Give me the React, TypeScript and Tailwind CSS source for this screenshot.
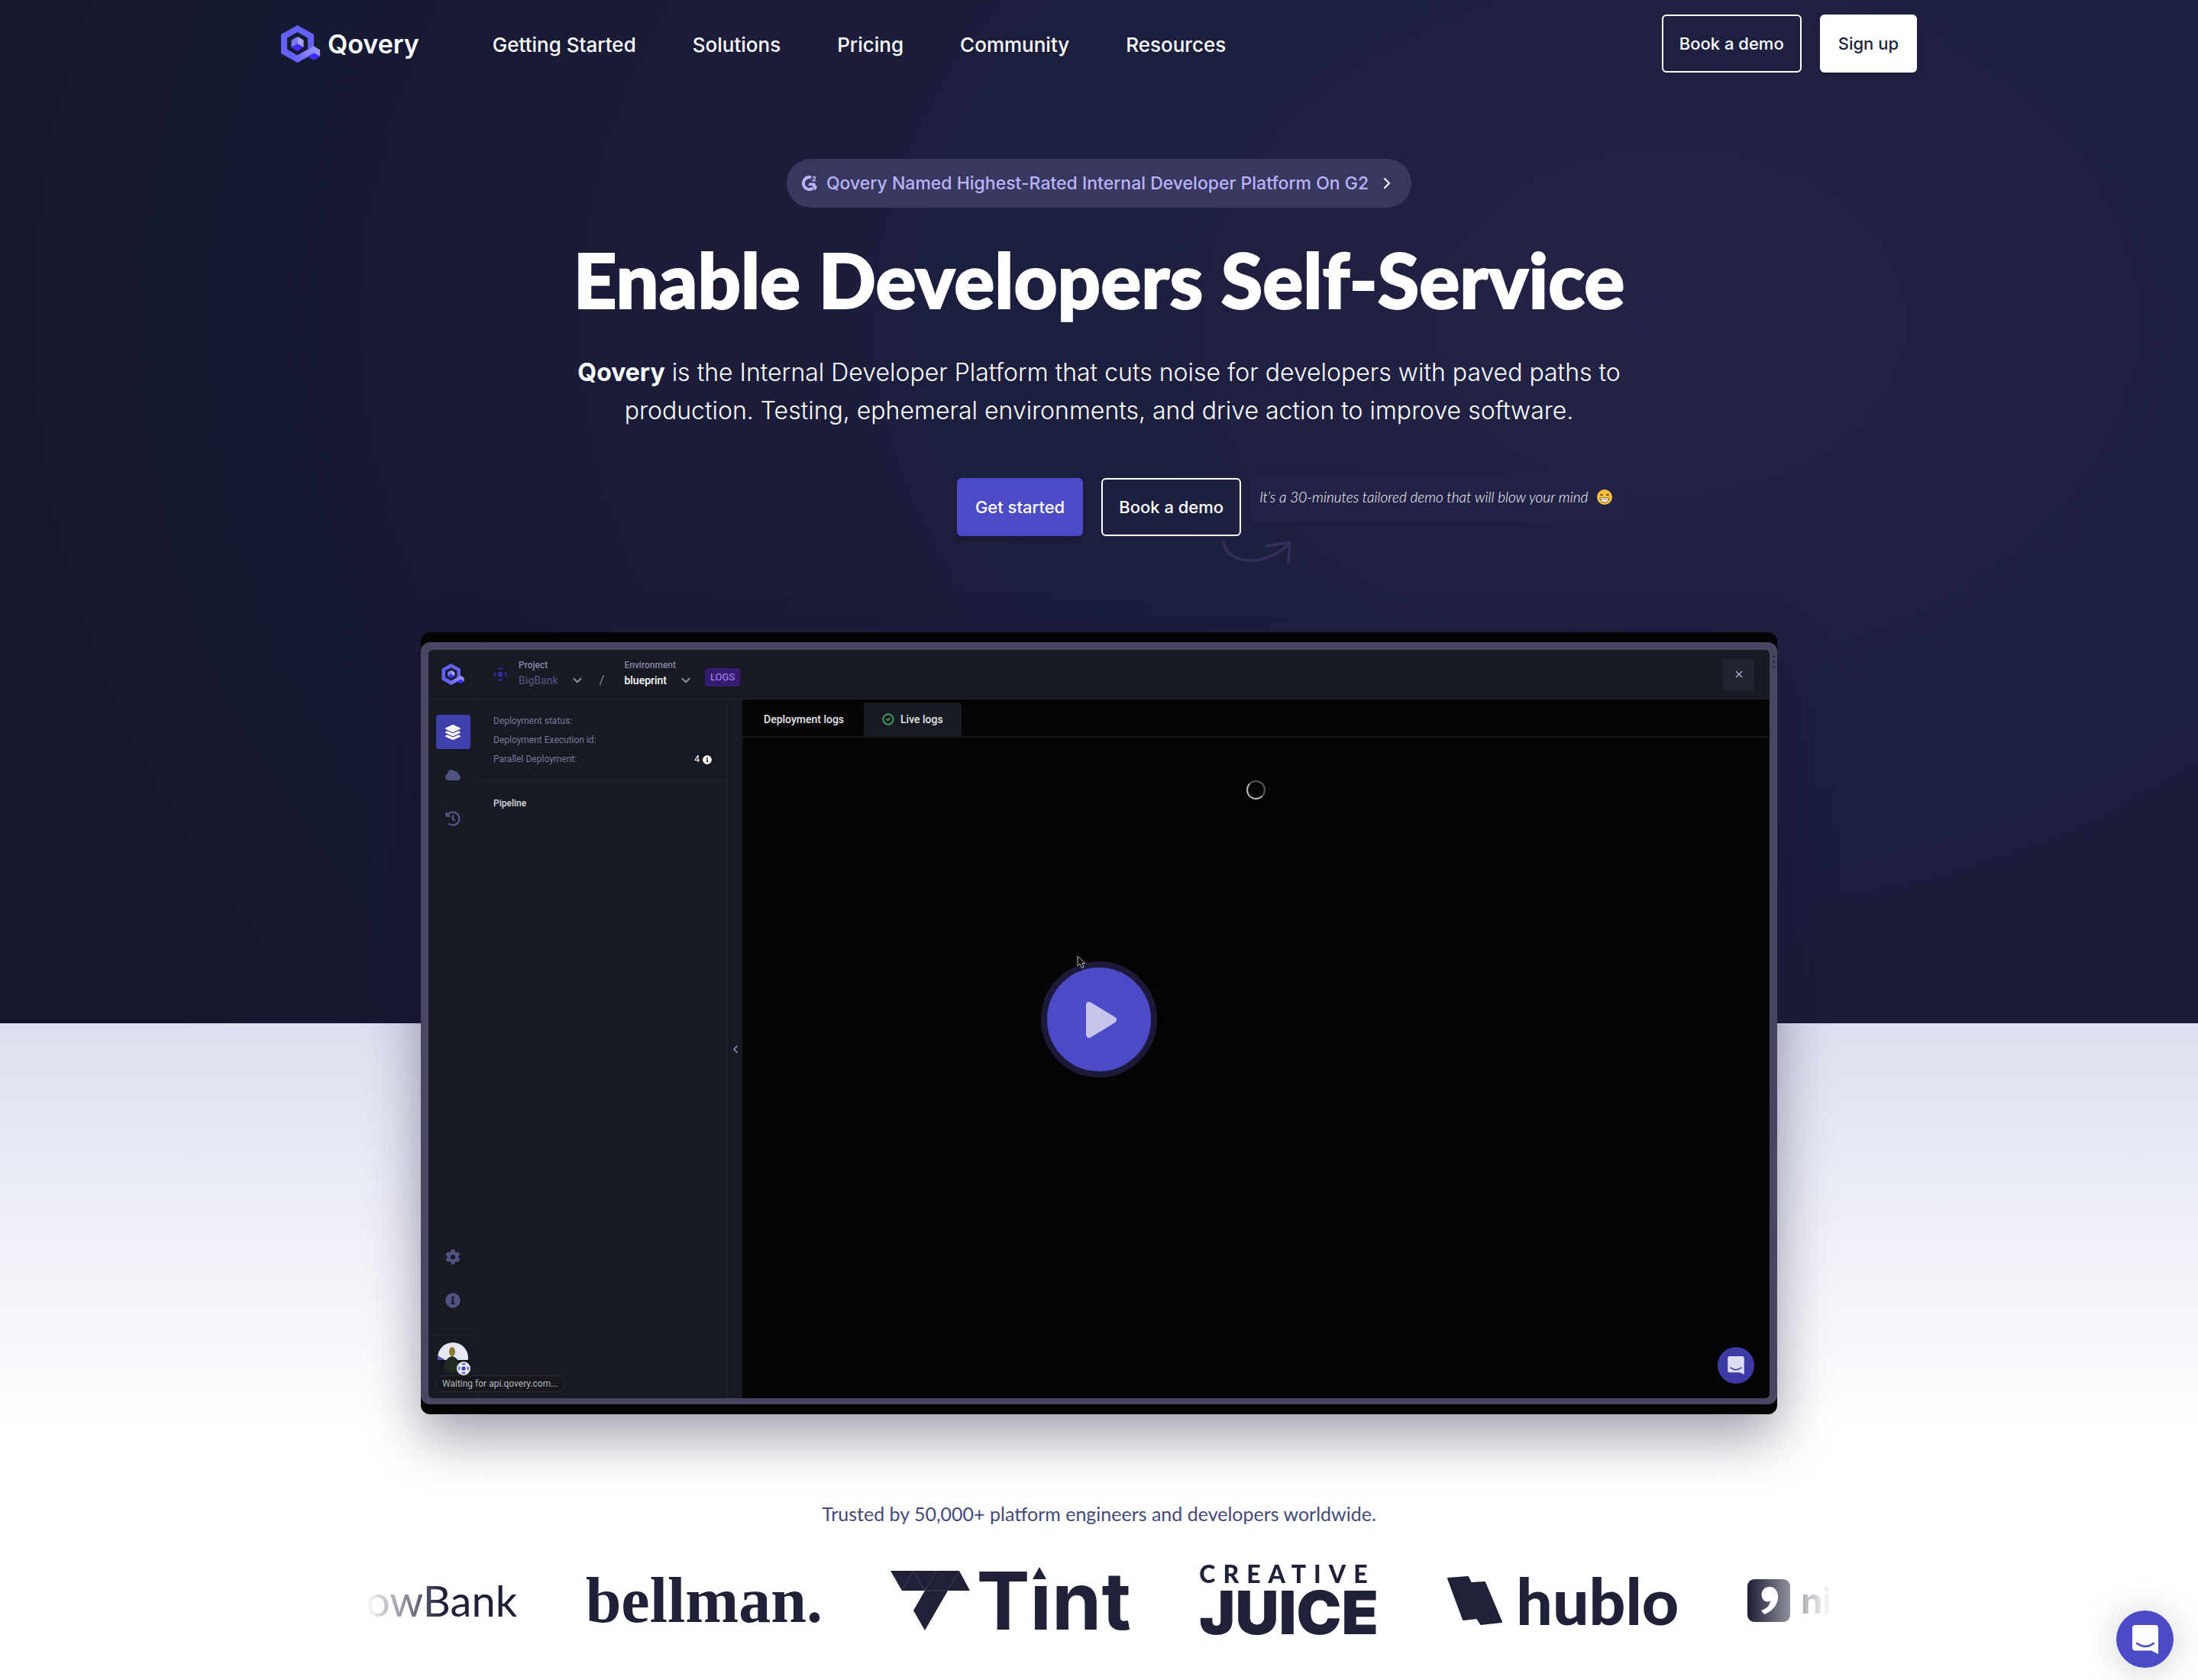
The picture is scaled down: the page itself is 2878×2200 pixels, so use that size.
import React from "react";
import { ChevronRight, ChevronDown, ChevronLeft, X, CircleCheck } from "lucide-react";
import { FaCog, FaInfoCircle, FaHistory, FaCloud, FaLayerGroup } from "react-icons/fa";

function Mark({ className }: { className?: string }) {
  return (
    <svg viewBox="0 0 51 49" className={className} aria-hidden="true">
      <defs>
        <linearGradient id="tail" x1="0" y1="0.8" x2="1" y2="0.2">
          <stop offset="0" stopColor="#6360f4" />
          <stop offset="1" stopColor="#9d98fb" />
        </linearGradient>
      </defs>
      <path fillRule="evenodd" fill="#6360f4" d="M21.500 0 43 12V37L21.500 49 0 37V12ZM21.500 9 8 16.800V31.500L21.500 39.500 35 31.500V16.800Z" />
      <path fill="url(#tail)" d="M21.500 39.500 43 27.500 51 32.500V41L43 36.500 21.500 49 15 45Z" />
      <path fill="#3a2df5" d="M43 36.500 51 41 43 46 35 41Z" />
      <path fill="#7a76f8" d="M21.500 15 13.500 19.500V29L21.500 24.500Z" />
      <path fill="#a7a3fc" d="M21.500 15 29.500 19.500V29L21.500 24.500Z" />
      <path fill="#3a2df5" d="M21.500 24.500 29.500 29 21.500 34 13.500 29Z" />
    </svg>
  );
}

function ChatGlyph({ className, mouth }: { className?: string; mouth: string }) {
  return (
    <svg viewBox="0 0 34 38" className={className} aria-hidden="true">
      <path fill="currentColor" d="M4 0H30Q34 0 34 4V38L25 33.500H4Q0 33.500 0 29.500V4Q0 0 4 0Z" />
      <path d="M6 24Q17 32 28 24" fill="none" stroke={mouth} strokeWidth="2.500" strokeLinecap="round" />
    </svg>
  );
}

function OrgGlyph({ className }: { className?: string }) {
  return (
    <svg viewBox="0 0 16 16" className={className} aria-hidden="true" fill="none" stroke="currentColor" strokeWidth="1.800">
      <circle cx="8" cy="8" r="3" fill="currentColor" stroke="none" />
      <path d="M5.500 1.800Q8 .6 10.500 1.800M5.500 14.200Q8 15.400 10.500 14.200M1.800 5.500Q.6 8 1.800 10.500M14.200 5.500Q15.400 8 14.200 10.500" />
    </svg>
  );
}

const links = ["Getting Started", "Solutions", "Pricing", "Community", "Resources"];
const outline = "flex h-[76px] items-center rounded-md border-2 border-white px-[21px] text-[22px] font-medium text-white";

function Header() {
  return (
    <header className="mx-auto flex h-[114px] w-full max-w-[2142px] items-center justify-between">
      <div className="flex items-center">
        <a href="#home" className="flex items-center gap-2.5 text-[34px] font-semibold text-white">
          <Mark className="h-[49px] w-[51px]" />
          Qovery
        </a>
        <nav className="ml-24 flex gap-[74px] pt-0.5 text-[26px] font-medium text-white">
          {links.map((l) => (
            <a key={l} href="#nav">{l}</a>
          ))}
        </nav>
      </div>
      <div className="flex gap-6">
        <button className={outline}>Book a demo</button>
        <button className="flex h-[76px] items-center rounded-md bg-white px-6 text-[22px] font-medium text-[#1d1f3c] shadow-md">Sign up</button>
      </div>
    </header>
  );
}

function Hero() {
  return (
    <section className="flex flex-col items-center pt-[94px] text-white">
      <a href="#g2" className="flex h-16 items-center gap-3 rounded-full bg-[#38385f] px-5 text-[23px] font-medium text-[#b9b3fb]">
        <svg viewBox="0 0 20 20" className="size-5" aria-hidden="true">
          <path d="M12 2.200A8 8 0 1 0 14.500 16.500" fill="none" stroke="currentColor" strokeWidth="4" />
          <path d="M10 9.500H16.500L20 15.500 16.800 19.500 13.500 13H8Z" fill="currentColor" />
          <path d="M14 3Q15 1 16.800 1.500 18.500 2.500 16.500 4.300L14.200 6.500H18.500" fill="none" stroke="currentColor" strokeWidth="1.500" />
        </svg>
        Qovery Named Highest-Rated Internal Developer Platform On G2
        <ChevronRight className="size-6 text-white" />
      </a>
      <h1 className="mt-[34px] font-[Lato] text-[99px] leading-[120px] font-black [-webkit-text-stroke:2px_#fff]">Enable Developers Self-Service</h1>
      <p className="mt-[37px] max-w-[1400px] text-center text-[32px] leading-[50px] font-light">
        <b className="font-bold">Qovery</b> is the Internal Developer Platform that cuts noise for developers with paved paths to production. Testing, ephemeral environments, and drive action to improve software.
      </p>
      <div className="relative mt-[63px] flex gap-6">
        <button className="flex h-[76px] items-center rounded-md bg-[#4b4bc8] px-6 text-[22px] font-medium shadow-md">Get started</button>
        <button className={outline}>Book a demo</button>
        <div className="absolute -top-1 left-full ml-3 flex h-[62px] items-center gap-3 rounded-md bg-[#212246] px-3 pb-1 font-[Lato] text-[19px] font-light whitespace-nowrap italic">
          It’s a 30-minutes tailored demo that will blow your mind
          <svg viewBox="0 0 20 20" className="size-5" aria-hidden="true">
            <circle cx="10" cy="10" r="10" fill="#f9c23c" />
            <path d="M4.500 8Q6 5 7.500 8M12.500 8Q14 5 15.500 8" fill="none" stroke="#5b3a12" strokeWidth="1.500" />
            <path d="M4 11H16Q15.500 17 10 17T4 11Z" fill="#fff" stroke="#7a5a2a" />
            <path d="M4.500 13.500H15.500" stroke="#999" />
          </svg>
        </div>
        <svg viewBox="0 0 92 32" className="absolute top-[82px] left-[347px] h-8 w-[92px]" fill="none" stroke="#30305a" strokeWidth="3.500" strokeLinecap="round" aria-hidden="true">
          <path d="M2 2C6 32 60 36 89 2M58 7 89 2 87 29" />
        </svg>
      </div>
    </section>
  );
}

const rail = "size-5 text-[#50537f]";

function Sidebar() {
  return (
    <aside className="flex w-[65px] flex-col items-center border-r border-[#1f222c]">
      <div className="mt-5 flex size-[45px] items-center justify-center rounded-sm bg-[#3f3fae] text-white">
        <FaLayerGroup className="size-5" />
      </div>
      <FaCloud className={"mt-6 " + rail} />
      <FaHistory className={"mt-[37px] " + rail} />
      <FaCog className={"mt-auto " + rail} />
      <FaInfoCircle className={"mt-[37px] " + rail} />
      <div className="relative mt-[34px] h-[84px] w-full border-t border-[#1f222c] pt-2.5">
        <svg viewBox="0 0 40 40" className="mx-auto size-10" aria-hidden="true">
          <clipPath id="face"><circle cx="20" cy="20" r="20" /></clipPath>
          <g clipPath="url(#face)">
            <rect width="40" height="23" fill="#e6e6f4" />
            <path d="M0 17 10 23H0Z" fill="#5a4aa8" />
            <rect y="23" width="40" height="17" fill="#14161d" />
            <path d="M6 40Q8 20 19 18 30 20 30 40Z" fill="#202a25" />
            <ellipse cx="19" cy="12" rx="4" ry="6" fill="#8a7a2c" />
          </g>
        </svg>
        <span className="absolute top-[35px] left-[37px] flex size-[18px] items-center justify-center rounded-full bg-[#e8e8f8] text-[#3b3bd0]">
          <OrgGlyph className="size-3.5" />
        </span>
        <span className="absolute top-[53px] left-[9px] rounded-full border border-[#2c2c33] bg-[#17181e] px-2 text-[12px] leading-5 whitespace-nowrap text-[#b4b4b8]">
          Waiting for api.qovery.com...
        </span>
      </div>
    </aside>
  );
}

function Demo() {
  return (
    <div className="relative mx-auto mt-[126px] h-[1024px] max-w-[1776px] overflow-hidden rounded-xl bg-[#050505] py-[13px] font-[Roboto] shadow-[0_30px_70px_rgba(20,18,50,0.4)]">
      <div className="flex h-[998px] flex-col rounded-xl bg-[#484660] px-2.5 pt-2.5 pb-2">
        <div className="flex min-h-0 flex-1 flex-col overflow-hidden rounded-md bg-[#171a22]">
          <div className="flex h-[65px] shrink-0 items-center border-b border-[#1f222c] pr-5">
            <div className="flex h-full w-[65px] items-center justify-center border-r border-[#1f222c]">
              <Mark className="h-7 w-[30px]" />
            </div>
            <OrgGlyph className="ml-5 size-[18px] text-[#2c2ca8]" />
            <div className="mb-1 ml-[15px] flex flex-col text-[12px] leading-5 font-medium text-[#8688a5]">
              Project
              <span className="flex items-center gap-4 text-[14px] text-[#4b4d73]">BigBank <ChevronDown className="size-[18px] text-[#85879b]" strokeWidth={3} /></span>
            </div>
            <span className="mt-4 ml-5 text-[16px] text-[#85879b]">/</span>
            <div className="mb-1 ml-[26px] flex flex-col text-[12px] leading-5 font-medium text-[#8688a5]">
              Environment
              <span className="flex items-center gap-4 text-[14px] text-white">blueprint <ChevronDown className="size-[18px] text-[#85879b]" strokeWidth={3} /></span>
            </div>
            <span className="mt-2 ml-4 rounded-sm bg-[#351c70] px-[7px] text-[13px] leading-6 text-[#b48af0]">LOGS</span>
            <button aria-label="Close" className="ml-auto flex size-[41px] items-center justify-center rounded-sm bg-[#20232d] text-[#9a9cc0]">
              <X className="size-3.5" strokeWidth={3} />
            </button>
          </div>
          <div className="flex min-h-0 flex-1">
            <Sidebar />
            <div className="w-[327px] border-r border-[#1f222c] text-[12px] text-[#777a99]">
              <div className="flex h-[107px] flex-col border-b border-[#1f222c] px-5 pt-4 leading-[25px]">
                <span>Deployment status:</span>
                <span>Deployment Execution id:</span>
                <span className="flex items-center justify-between">Parallel Deployment: <span className="flex items-center gap-1 text-white">4 <FaInfoCircle className="size-3" /></span></span>
              </div>
              <div className="px-5 pt-5 font-medium text-[#d8d8e0]">Pipeline</div>
            </div>
            <div className="flex w-[19px] items-center justify-center text-[#777a99]">
              <ChevronLeft className="size-4" strokeWidth={3} />
            </div>
            <div className="flex-1 bg-[#050505]">
              <div className="flex h-[50px] items-end border-b-2 border-[#131417] pl-2 text-[14px] font-medium text-[#e4e4ea]">
                <span className="px-5 pb-[11px]">Deployment logs</span>
                <span className="ml-1.5 flex h-11 items-center gap-2 rounded-t-sm bg-[#171a22] px-6"><CircleCheck className="size-4 text-[#3d9a5c]" strokeWidth={3} /> Live logs</span>
              </div>
              <div className="mx-auto mt-14 size-[25px] rounded-full border-2 border-[#55565c] border-b-[#b8b8bc] border-l-[#b8b8bc]" />
            </div>
          </div>
        </div>
      </div>
      <div className="absolute top-[30px] right-[3px] flex flex-col gap-1">
        <i className="size-[3px] rounded-full bg-[#2b2a3d]" />
        <i className="size-[3px] rounded-full bg-[#2b2a3d]" />
        <i className="size-[3px] rounded-full bg-[#2b2a3d]" />
      </div>
      <div className="absolute right-[30px] bottom-10 flex size-12 items-center justify-center rounded-full bg-[#3c3ba6] text-[#dcdcf0]">
        <ChatGlyph className="h-6 w-[22px]" mouth="#3c3ba6" />
      </div>
      <button aria-label="Play video" className="absolute top-[431px] left-1/2 flex size-[152px] -translate-x-1/2 items-center justify-center rounded-full border-8 border-[#1c1a38] bg-[#4b4bc8]">
        <svg viewBox="0 0 40 47" className="ml-1.5 h-[47px] w-10" aria-hidden="true">
          <path d="M4 4 36 23.500 4 43Z" fill="#c6c4ec" stroke="#c6c4ec" strokeWidth="8" strokeLinejoin="round" />
        </svg>
      </button>
      <svg viewBox="0 0 12 18" className="absolute top-[423px] left-[859px] h-[18px] w-3" aria-hidden="true">
        <path d="M1 1V14L4 11 6.500 16.500 9 15.500 7 10.500H11Z" fill="#111" stroke="#b5b5b5" />
      </svg>
    </div>
  );
}

function Logos() {
  return (
    <div className="mx-auto mt-9 flex h-[120px] w-full max-w-[1920px] items-center justify-between overflow-hidden text-[#1f2138] [mask-image:linear-gradient(to_right,transparent,black_100px,black_calc(100%-110px),transparent)]">
      <span className="font-[Lato] text-[56px]">owBank</span>
      <span className="font-['Liberation_Serif'] text-[84px] font-bold">bellman.</span>
      <span className="flex items-center gap-2">
        <svg viewBox="0 0 104 78" className="h-[78px] w-[104px]" aria-hidden="true">
          <path d="M0 0H90L104 26H75L45 78 30 52 45 26H15Z" fill="#1f2138" />
          <path d="M30 0 15 26M30 0 45 26 60 0M90 0 75 26H45" stroke="#55576c" strokeWidth=".6" fill="none" />
        </svg>
        <span className="relative text-[105px] leading-[120px] font-bold">
          Tint
          <svg viewBox="0 0 28 24" className="absolute top-3 left-[69px] h-6 w-7" aria-hidden="true">
            <rect width="28" height="24" fill="#fff" />
            <path d="M14 4 23 20H5Z" fill="#1f2138" />
          </svg>
        </span>
      </span>
      <span className="flex flex-col items-start pt-2">
        <span className="-mr-3 font-[Lato] text-[32px] leading-[22px] font-black tracking-[10px]">CREATIVE</span>
        <span className="text-[79px] leading-[79px] font-black">JUICE</span>
      </span>
      <span className="flex items-center gap-[18px]">
        <svg viewBox="0 0 73 64" className="h-16 w-[73px]" aria-hidden="true">
          <path d="M2 3 28 1 32 9 50 8 72 60 45 63 40 55 22 57Z" fill="#1f2138" stroke="#1f2138" strokeWidth="2" strokeLinejoin="round" />
        </svg>
        <span className="font-[Lato] text-[84px] font-black">hublo</span>
      </span>
      <span className="flex items-center gap-3.5">
        <svg viewBox="0 0 56 56" className="size-14" aria-hidden="true">
          <rect width="56" height="56" rx="9" fill="#1f2138" />
          <path d="M29 10C19 10 16 21 21 27 24 31 29 29 30 28 29 36 24 39 18 41L22 46C35 41 41 31 40 21 39 13 34 10 29 10Z" fill="#fff" />
        </svg>
        <span className="text-[46px] font-bold">ni</span>
      </span>
    </div>
  );
}

export default function App() {
  return (
    <div className="min-h-screen overflow-hidden bg-white bg-[linear-gradient(#dddff0_1340px,#fff_1870px)] font-[Inter,sans-serif]">
      <div className="bg-[radial-gradient(ellipse_2300px_1700px_at_76%_420px,#222346,#1b1d3b_50%,#14172e)] bg-[length:100%_1340px] bg-no-repeat">
        <Header />
        <Hero />
        <Demo />
        <p className="mt-[112px] text-center font-[Lato] text-[25px] leading-9 text-[#45487a]">Trusted by 50,000+ platform engineers and developers worldwide.</p>
        <Logos />
      </div>
      <button aria-label="Open chat" className="fixed right-8 bottom-4 flex size-[75px] items-center justify-center rounded-full bg-[#4b4bc8] text-white shadow-[0_4px_50px_rgba(0,0,0,0.2)]">
        <ChatGlyph className="h-[38px] w-[34px]" mouth="#4b4bc8" />
      </button>
    </div>
  );
}
